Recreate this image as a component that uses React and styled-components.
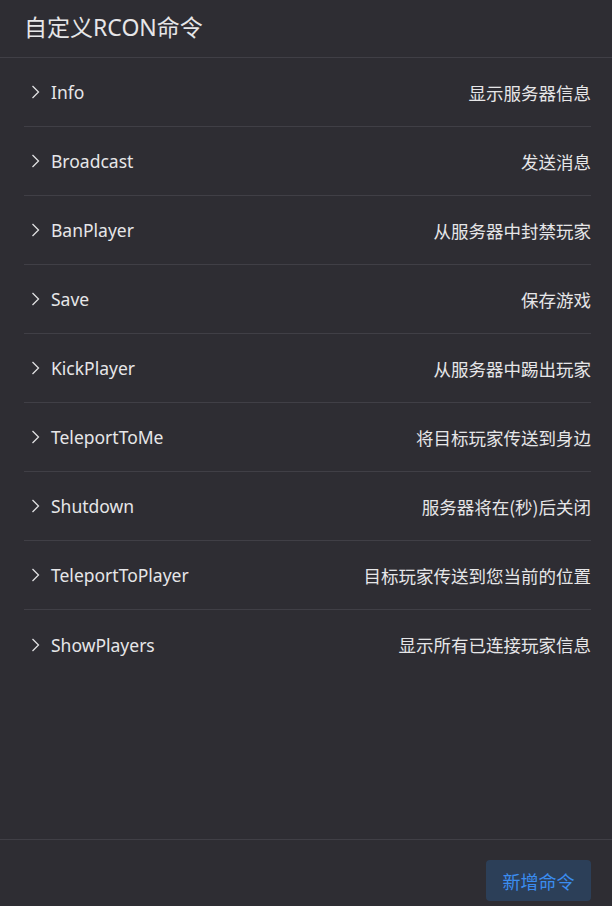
import styled, { createGlobalStyle } from 'styled-components';

const colors = {
  BG: '#2e2d33',
  LINE: '#403f46',
  TEXT: '#e6e6e8',
  BLUE: '#3b8df0',
  BLUE_BG: '#2c3f58',
};

const GlobalStyle = createGlobalStyle`
  * { box-sizing: border-box; }
  html, body {
    margin: 0;
    padding: 0;
    background: ${colors.BG};
  }
  body {
    font-family: "Noto Sans", "Noto Sans CJK SC", sans-serif;
    color: ${colors.TEXT};
  }
`;

const Panel = styled.div`
  display: flex;
  flex-direction: column;
  width: 612px;
  height: 906px;
  background: ${colors.BG};
  overflow: hidden;
`;

const Header = styled.div`
  display: flex;
  align-items: center;
  height: 58px;
  padding: 0 24px 5px;
  border-bottom: 1px solid ${colors.LINE};
`;

const Title = styled.h1`
  margin: 0;
  font-size: 23px;
  font-weight: 400;
  color: ${colors.TEXT};
  font-family: "Noto Sans", "Noto Sans CJK SC", sans-serif;
`;

const List = styled.div`
  flex: 1;
  padding: 0 21px 0 24px;
`;

const Row = styled.div`
  display: flex;
  align-items: center;
  justify-content: space-between;
  height: 69px;
  border-bottom: ${(props) => (props.last ? 'none' : `1px solid ${colors.LINE}`)};
`;

const Left = styled.div`
  display: flex;
  align-items: center;
  gap: 11px;
  padding-left: 7px;
`;

const Label = styled.span`
  font-size: 17.5px;
  color: ${colors.TEXT};
`;

const Desc = styled.span`
  font-size: 17.5px;
  color: ${colors.TEXT};
  font-family: "Noto Sans CJK SC", sans-serif;
`;

const Footer = styled.div`
  display: flex;
  justify-content: flex-end;
  align-items: flex-start;
  height: 67px;
  padding: 20px 21px 0;
  border-top: 1px solid ${colors.LINE};
`;

const AddButton = styled.button`
  width: 105px;
  height: 41px;
  border: none;
  border-radius: 4px;
  background: ${colors.BLUE_BG};
  color: ${colors.BLUE};
  font-size: 18px;
  font-family: "Noto Sans CJK SC", sans-serif;
  cursor: pointer;
`;

const Chevron = () => (
  <svg width="9" height="14" viewBox="0 0 9 14" fill="none">
    <path d="M1.5 1 L7.5 7 L1.5 13" stroke="#e0e0e2" strokeWidth="1.3" />
  </svg>
);

const commands = [
  { name: 'Info', desc: '显示服务器信息' },
  { name: 'Broadcast', desc: '发送消息' },
  { name: 'BanPlayer', desc: '从服务器中封禁玩家' },
  { name: 'Save', desc: '保存游戏' },
  { name: 'KickPlayer', desc: '从服务器中踢出玩家' },
  { name: 'TeleportToMe', desc: '将目标玩家传送到身边' },
  { name: 'Shutdown', desc: '服务器将在(秒)后关闭' },
  { name: 'TeleportToPlayer', desc: '目标玩家传送到您当前的位置' },
  { name: 'ShowPlayers', desc: '显示所有已连接玩家信息' },
];

export default function App() {
  return (
    <Panel>
      <GlobalStyle />
      <Header>
        <Title>自定义RCON命令</Title>
      </Header>
      <List>
        {commands.map((cmd, index) => (
          <Row key={cmd.name} last={index === commands.length - 1}>
            <Left>
              <Chevron />
              <Label>{cmd.name}</Label>
            </Left>
            <Desc>{cmd.desc}</Desc>
          </Row>
        ))}
      </List>
      <Footer>
        <AddButton>新增命令</AddButton>
      </Footer>
    </Panel>
  );
}
